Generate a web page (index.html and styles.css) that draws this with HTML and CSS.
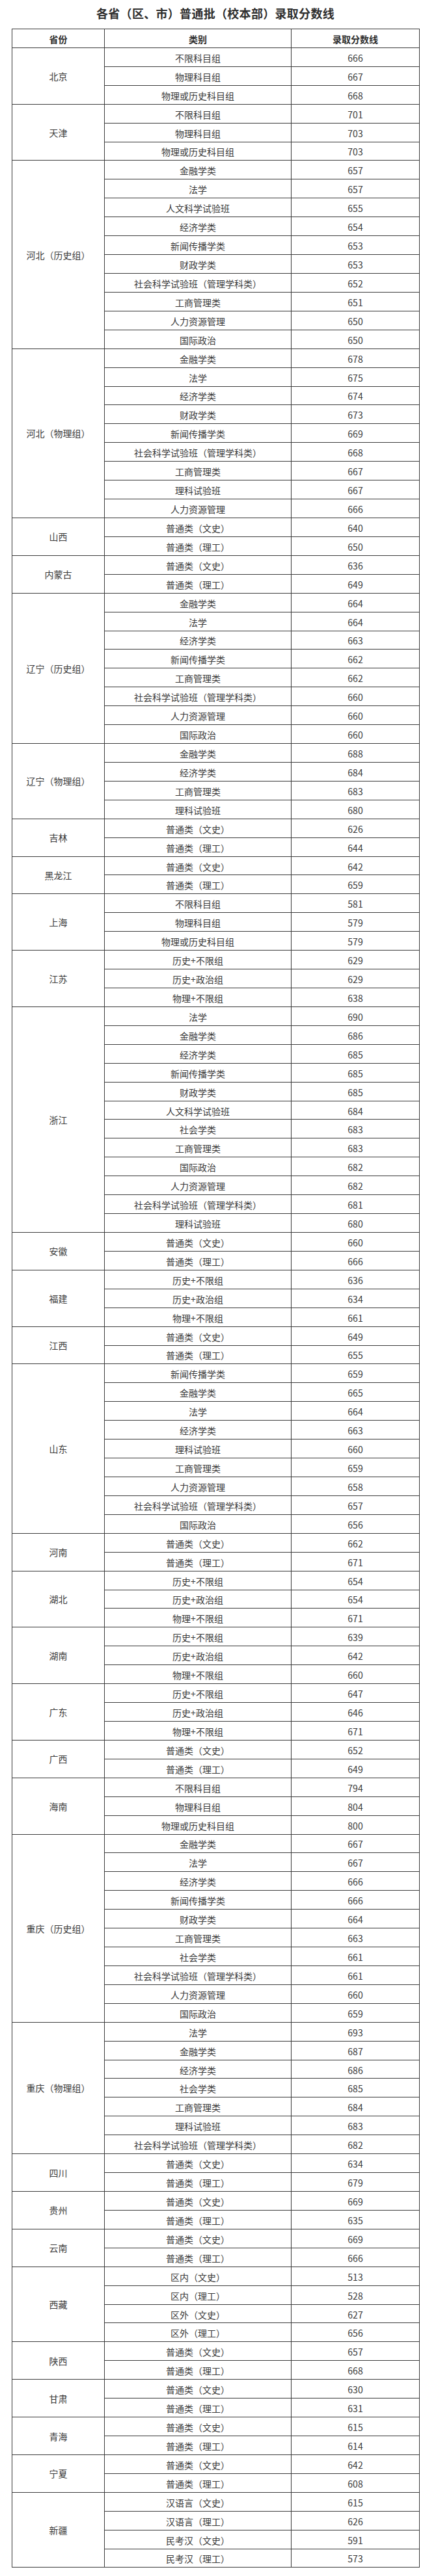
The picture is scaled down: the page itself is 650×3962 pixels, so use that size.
FILE: index.html
```html
<!DOCTYPE html>
<html lang="zh-CN">
<head>
<meta charset="utf-8">
<title>各省（区、市）普通批（校本部）录取分数线</title>
<link rel="stylesheet" href="styles.css">
</head>
<body>
<div class="page">
<h1 class="title">各省（区、市）普通批（校本部）录取分数线</h1>
<table class="scores">
<colgroup><col class="c-prov"><col class="c-type"><col class="c-score"></colgroup>
<thead>
<tr><th>省份</th><th>类别</th><th>录取分数线</th></tr>
</thead>
<tbody>
<tr><td class="prov" rowspan="3">北京</td><td>不限科目组</td><td>666</td></tr>
<tr><td>物理科目组</td><td>667</td></tr>
<tr><td>物理或历史科目组</td><td>668</td></tr>
<tr><td class="prov" rowspan="3">天津</td><td>不限科目组</td><td>701</td></tr>
<tr><td>物理科目组</td><td>703</td></tr>
<tr><td>物理或历史科目组</td><td>703</td></tr>
<tr><td class="prov" rowspan="10">河北（历史组）</td><td>金融学类</td><td>657</td></tr>
<tr><td>法学</td><td>657</td></tr>
<tr><td>人文科学试验班</td><td>655</td></tr>
<tr><td>经济学类</td><td>654</td></tr>
<tr><td>新闻传播学类</td><td>653</td></tr>
<tr><td>财政学类</td><td>653</td></tr>
<tr><td>社会科学试验班（管理学科类）</td><td>652</td></tr>
<tr><td>工商管理类</td><td>651</td></tr>
<tr><td>人力资源管理</td><td>650</td></tr>
<tr><td>国际政治</td><td>650</td></tr>
<tr><td class="prov" rowspan="9">河北（物理组）</td><td>金融学类</td><td>678</td></tr>
<tr><td>法学</td><td>675</td></tr>
<tr><td>经济学类</td><td>674</td></tr>
<tr><td>财政学类</td><td>673</td></tr>
<tr><td>新闻传播学类</td><td>669</td></tr>
<tr><td>社会科学试验班（管理学科类）</td><td>668</td></tr>
<tr><td>工商管理类</td><td>667</td></tr>
<tr><td>理科试验班</td><td>667</td></tr>
<tr><td>人力资源管理</td><td>666</td></tr>
<tr><td class="prov" rowspan="2">山西</td><td>普通类（文史）</td><td>640</td></tr>
<tr><td>普通类（理工）</td><td>650</td></tr>
<tr><td class="prov" rowspan="2">内蒙古</td><td>普通类（文史）</td><td>636</td></tr>
<tr><td>普通类（理工）</td><td>649</td></tr>
<tr><td class="prov" rowspan="8">辽宁（历史组）</td><td>金融学类</td><td>664</td></tr>
<tr><td>法学</td><td>664</td></tr>
<tr><td>经济学类</td><td>663</td></tr>
<tr><td>新闻传播学类</td><td>662</td></tr>
<tr><td>工商管理类</td><td>662</td></tr>
<tr><td>社会科学试验班（管理学科类）</td><td>660</td></tr>
<tr><td>人力资源管理</td><td>660</td></tr>
<tr><td>国际政治</td><td>660</td></tr>
<tr><td class="prov" rowspan="4">辽宁（物理组）</td><td>金融学类</td><td>688</td></tr>
<tr><td>经济学类</td><td>684</td></tr>
<tr><td>工商管理类</td><td>683</td></tr>
<tr><td>理科试验班</td><td>680</td></tr>
<tr><td class="prov" rowspan="2">吉林</td><td>普通类（文史）</td><td>626</td></tr>
<tr><td>普通类（理工）</td><td>644</td></tr>
<tr><td class="prov" rowspan="2">黑龙江</td><td>普通类（文史）</td><td>642</td></tr>
<tr><td>普通类（理工）</td><td>659</td></tr>
<tr><td class="prov" rowspan="3">上海</td><td>不限科目组</td><td>581</td></tr>
<tr><td>物理科目组</td><td>579</td></tr>
<tr><td>物理或历史科目组</td><td>579</td></tr>
<tr><td class="prov" rowspan="3">江苏</td><td>历史+不限组</td><td>629</td></tr>
<tr><td>历史+政治组</td><td>629</td></tr>
<tr><td>物理+不限组</td><td>638</td></tr>
<tr><td class="prov" rowspan="12">浙江</td><td>法学</td><td>690</td></tr>
<tr><td>金融学类</td><td>686</td></tr>
<tr><td>经济学类</td><td>685</td></tr>
<tr><td>新闻传播学类</td><td>685</td></tr>
<tr><td>财政学类</td><td>685</td></tr>
<tr><td>人文科学试验班</td><td>684</td></tr>
<tr><td>社会学类</td><td>683</td></tr>
<tr><td>工商管理类</td><td>683</td></tr>
<tr><td>国际政治</td><td>682</td></tr>
<tr><td>人力资源管理</td><td>682</td></tr>
<tr><td>社会科学试验班（管理学科类）</td><td>681</td></tr>
<tr><td>理科试验班</td><td>680</td></tr>
<tr><td class="prov" rowspan="2">安徽</td><td>普通类（文史）</td><td>660</td></tr>
<tr><td>普通类（理工）</td><td>666</td></tr>
<tr><td class="prov" rowspan="3">福建</td><td>历史+不限组</td><td>636</td></tr>
<tr><td>历史+政治组</td><td>634</td></tr>
<tr><td>物理+不限组</td><td>661</td></tr>
<tr><td class="prov" rowspan="2">江西</td><td>普通类（文史）</td><td>649</td></tr>
<tr><td>普通类（理工）</td><td>655</td></tr>
<tr><td class="prov" rowspan="9">山东</td><td>新闻传播学类</td><td>659</td></tr>
<tr><td>金融学类</td><td>665</td></tr>
<tr><td>法学</td><td>664</td></tr>
<tr><td>经济学类</td><td>663</td></tr>
<tr><td>理科试验班</td><td>660</td></tr>
<tr><td>工商管理类</td><td>659</td></tr>
<tr><td>人力资源管理</td><td>658</td></tr>
<tr><td>社会科学试验班（管理学科类）</td><td>657</td></tr>
<tr><td>国际政治</td><td>656</td></tr>
<tr><td class="prov" rowspan="2">河南</td><td>普通类（文史）</td><td>662</td></tr>
<tr><td>普通类（理工）</td><td>671</td></tr>
<tr><td class="prov" rowspan="3">湖北</td><td>历史+不限组</td><td>654</td></tr>
<tr><td>历史+政治组</td><td>654</td></tr>
<tr><td>物理+不限组</td><td>671</td></tr>
<tr><td class="prov" rowspan="3">湖南</td><td>历史+不限组</td><td>639</td></tr>
<tr><td>历史+政治组</td><td>642</td></tr>
<tr><td>物理+不限组</td><td>660</td></tr>
<tr><td class="prov" rowspan="3">广东</td><td>历史+不限组</td><td>647</td></tr>
<tr><td>历史+政治组</td><td>646</td></tr>
<tr><td>物理+不限组</td><td>671</td></tr>
<tr><td class="prov" rowspan="2">广西</td><td>普通类（文史）</td><td>652</td></tr>
<tr><td>普通类（理工）</td><td>649</td></tr>
<tr><td class="prov" rowspan="3">海南</td><td>不限科目组</td><td>794</td></tr>
<tr><td>物理科目组</td><td>804</td></tr>
<tr><td>物理或历史科目组</td><td>800</td></tr>
<tr><td class="prov" rowspan="10">重庆（历史组）</td><td>金融学类</td><td>667</td></tr>
<tr><td>法学</td><td>667</td></tr>
<tr><td>经济学类</td><td>666</td></tr>
<tr><td>新闻传播学类</td><td>666</td></tr>
<tr><td>财政学类</td><td>664</td></tr>
<tr><td>工商管理类</td><td>663</td></tr>
<tr><td>社会学类</td><td>661</td></tr>
<tr><td>社会科学试验班（管理学科类）</td><td>661</td></tr>
<tr><td>人力资源管理</td><td>660</td></tr>
<tr><td>国际政治</td><td>659</td></tr>
<tr><td class="prov" rowspan="7">重庆（物理组）</td><td>法学</td><td>693</td></tr>
<tr><td>金融学类</td><td>687</td></tr>
<tr><td>经济学类</td><td>686</td></tr>
<tr><td>社会学类</td><td>685</td></tr>
<tr><td>工商管理类</td><td>684</td></tr>
<tr><td>理科试验班</td><td>683</td></tr>
<tr><td>社会科学试验班（管理学科类）</td><td>682</td></tr>
<tr><td class="prov" rowspan="2">四川</td><td>普通类（文史）</td><td>634</td></tr>
<tr><td>普通类（理工）</td><td>679</td></tr>
<tr><td class="prov" rowspan="2">贵州</td><td>普通类（文史）</td><td>669</td></tr>
<tr><td>普通类（理工）</td><td>635</td></tr>
<tr><td class="prov" rowspan="2">云南</td><td>普通类（文史）</td><td>669</td></tr>
<tr><td>普通类（理工）</td><td>666</td></tr>
<tr><td class="prov" rowspan="4">西藏</td><td>区内（文史）</td><td>513</td></tr>
<tr><td>区内（理工）</td><td>528</td></tr>
<tr><td>区外（文史）</td><td>627</td></tr>
<tr><td>区外（理工）</td><td>656</td></tr>
<tr><td class="prov" rowspan="2">陕西</td><td>普通类（文史）</td><td>657</td></tr>
<tr><td>普通类（理工）</td><td>668</td></tr>
<tr><td class="prov" rowspan="2">甘肃</td><td>普通类（文史）</td><td>630</td></tr>
<tr><td>普通类（理工）</td><td>631</td></tr>
<tr><td class="prov" rowspan="2">青海</td><td>普通类（文史）</td><td>615</td></tr>
<tr><td>普通类（理工）</td><td>614</td></tr>
<tr><td class="prov" rowspan="2">宁夏</td><td>普通类（文史）</td><td>642</td></tr>
<tr><td>普通类（理工）</td><td>608</td></tr>
<tr><td class="prov" rowspan="4">新疆</td><td>汉语言（文史）</td><td>615</td></tr>
<tr><td>汉语言（理工）</td><td>626</td></tr>
<tr><td>民考汉（文史）</td><td>591</td></tr>
<tr><td>民考汉（理工）</td><td>573</td></tr>
</tbody>
</table>
</div>
</body>
</html>
```
FILE: styles.css
```css
html, body {
  margin: 0;
  padding: 0;
  background: #ffffff;
}

body {
  font-family: "Noto Sans CJK SC", "Microsoft YaHei", "Noto Sans", sans-serif;
  color: #333333;
}

.page {
  width: 626px;
  margin-left: 18px;
}

.title {
  margin: 0;
  height: 44px;
  line-height: 40px;
  text-align: center;
  font-size: 18px;
  font-weight: bold;
  letter-spacing: 0.3px;
  color: #2e2e2e;
}

.scores {
  width: 626px;
  border-collapse: collapse;
  table-layout: fixed;
}

.c-prov { width: 142px; }
.c-type { width: 287px; }
.c-score { width: 197px; }

.scores th,
.scores td {
  border: 1px solid #3c3c3c;
  height: 28.93px;
  padding: 2px 0 0 0;
  box-sizing: border-box;
  text-align: center;
  vertical-align: middle;
  font-size: 14px;
  line-height: 16px;
  font-weight: normal;
  color: #3a3a3a;
}

.scores th {
  font-weight: bold;
  color: #2e2e2e;
}

.scores td.prov {
  padding-top: 0;
}
```
